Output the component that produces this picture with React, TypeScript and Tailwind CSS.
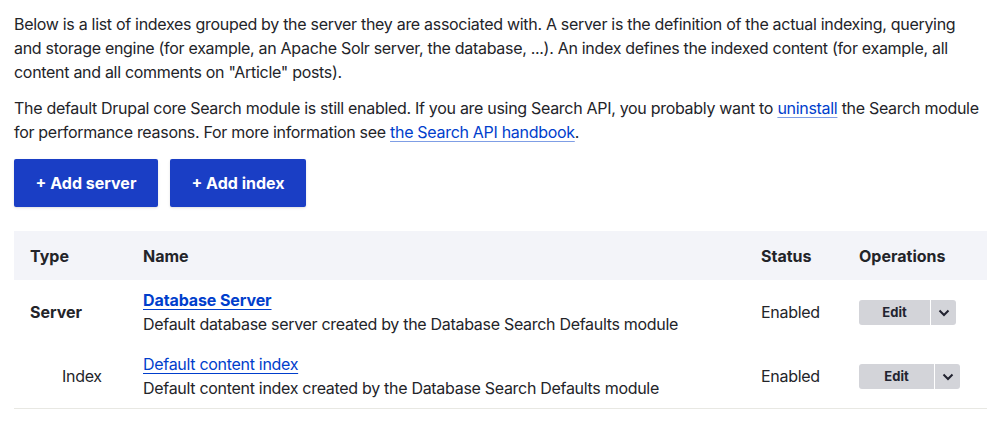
import React from "react";

const rows = [
  {
    type: "Server",
    name: "Database Server",
    description: "Default database server created by the Database Search Defaults module",
    status: "Enabled",
    isServer: true,
  },
  {
    type: "Index",
    name: "Default content index",
    description: "Default content index created by the Database Search Defaults module",
    status: "Enabled",
    isServer: false,
  },
];

const Chevron = () => (
  <svg width="12" height="8" viewBox="0 0 12 8" fill="none">
    <path d="M1.5 1.5 6 6l4.5-4.5" stroke="#222330" strokeWidth="2" />
  </svg>
);

const DropButton = ({ wide }: { wide?: boolean }) => (
  <div className="flex h-[25px] rounded-[3px] bg-[#d3d4d9] overflow-hidden">
    <button
      className={`${wide ? "w-[75px]" : "w-[71px]"} text-[13px] font-bold text-[#222330] text-center leading-[25px]`}
    >
      Edit
    </button>
    <div className="w-px bg-white" />
    <button className="w-[25px] flex items-center justify-center">
      <Chevron />
    </button>
  </div>
);

const linkCls = "text-[#003ecc] underline decoration-[#003ecc]/50 underline-offset-[3px]";

const App = () => {
  return (
    <div
      className="w-[1000px] h-[431px] bg-white text-[#232429] text-[16px] leading-6 px-[14px]"
      style={{ fontFamily: "Inter, 'Noto Sans', sans-serif" }}
    >
      <p className="pt-[12px] tracking-[-0.3px]">
        Below is a list of indexes grouped by the server they are associated with. A server is the
        definition of the actual indexing, querying and storage engine (for example, an Apache Solr
        server, the database, ...). An index defines the indexed content (for example, all content and
        all comments on "Article" posts).
      </p>
      <p className="mt-3 tracking-[-0.3px]">
        The default Drupal core Search module is still enabled. If you are using Search API, you
        probably want to{" "}
        <a href="#" className={linkCls}>
          uninstall
        </a>{" "}
        the Search module for performance reasons. For more information see{" "}
        <a href="#" className={linkCls}>
          the Search API handbook
        </a>
        .
      </p>

      <div className="flex gap-3 mt-[15px]">
        <button className="h-12 w-[144px] bg-[#1a3ec5] text-white font-bold rounded-[2px] shadow-sm">
          + Add server
        </button>
        <button className="h-12 w-[136px] bg-[#1a3ec5] text-white font-bold rounded-[2px] shadow-sm">
          + Add index
        </button>
      </div>

      <table className="mt-6 w-[973px] table-fixed border-collapse">
        <colgroup>
          <col className="w-[113px]" />
          <col />
          <col className="w-[98px]" />
          <col className="w-[144px]" />
        </colgroup>
        <thead>
          <tr className="bg-[#f3f4f9] h-[49px]">
            <th className="text-left font-bold px-4">Type</th>
            <th className="text-left font-bold px-4">Name</th>
            <th className="text-left font-bold px-4">Status</th>
            <th className="text-left font-bold px-4">Operations</th>
          </tr>
        </thead>
        <tbody>
          {rows.map((row, i) => (
            <tr
              key={row.name}
              className={i === rows.length - 1 ? "border-b border-[#e8e8e3]" : ""}
            >
              <td
                className={`py-2 ${row.isServer ? "px-4 font-bold" : "pl-[48px] pr-4 tracking-[-0.3px]"}`}
              >
                {row.type}
              </td>
              <td className="py-2 px-4">
                <a
                  href="#"
                  className={`text-[#003ecc] underline underline-offset-[3px] decoration-[#003ecc] ${row.isServer ? "font-bold tracking-[-0.1px]" : "tracking-[-0.3px]"}`}
                >
                  {row.name}
                </a>
                <div className="tracking-[-0.3px]">{row.description}</div>
              </td>
              <td className="py-2 px-4 tracking-[-0.3px]">{row.status}</td>
              <td className="py-2 px-4">
                <div className="inline-block">
                  <DropButton wide={!row.isServer} />
                </div>
              </td>
            </tr>
          ))}
        </tbody>
      </table>
    </div>
  );
};

export default App;
